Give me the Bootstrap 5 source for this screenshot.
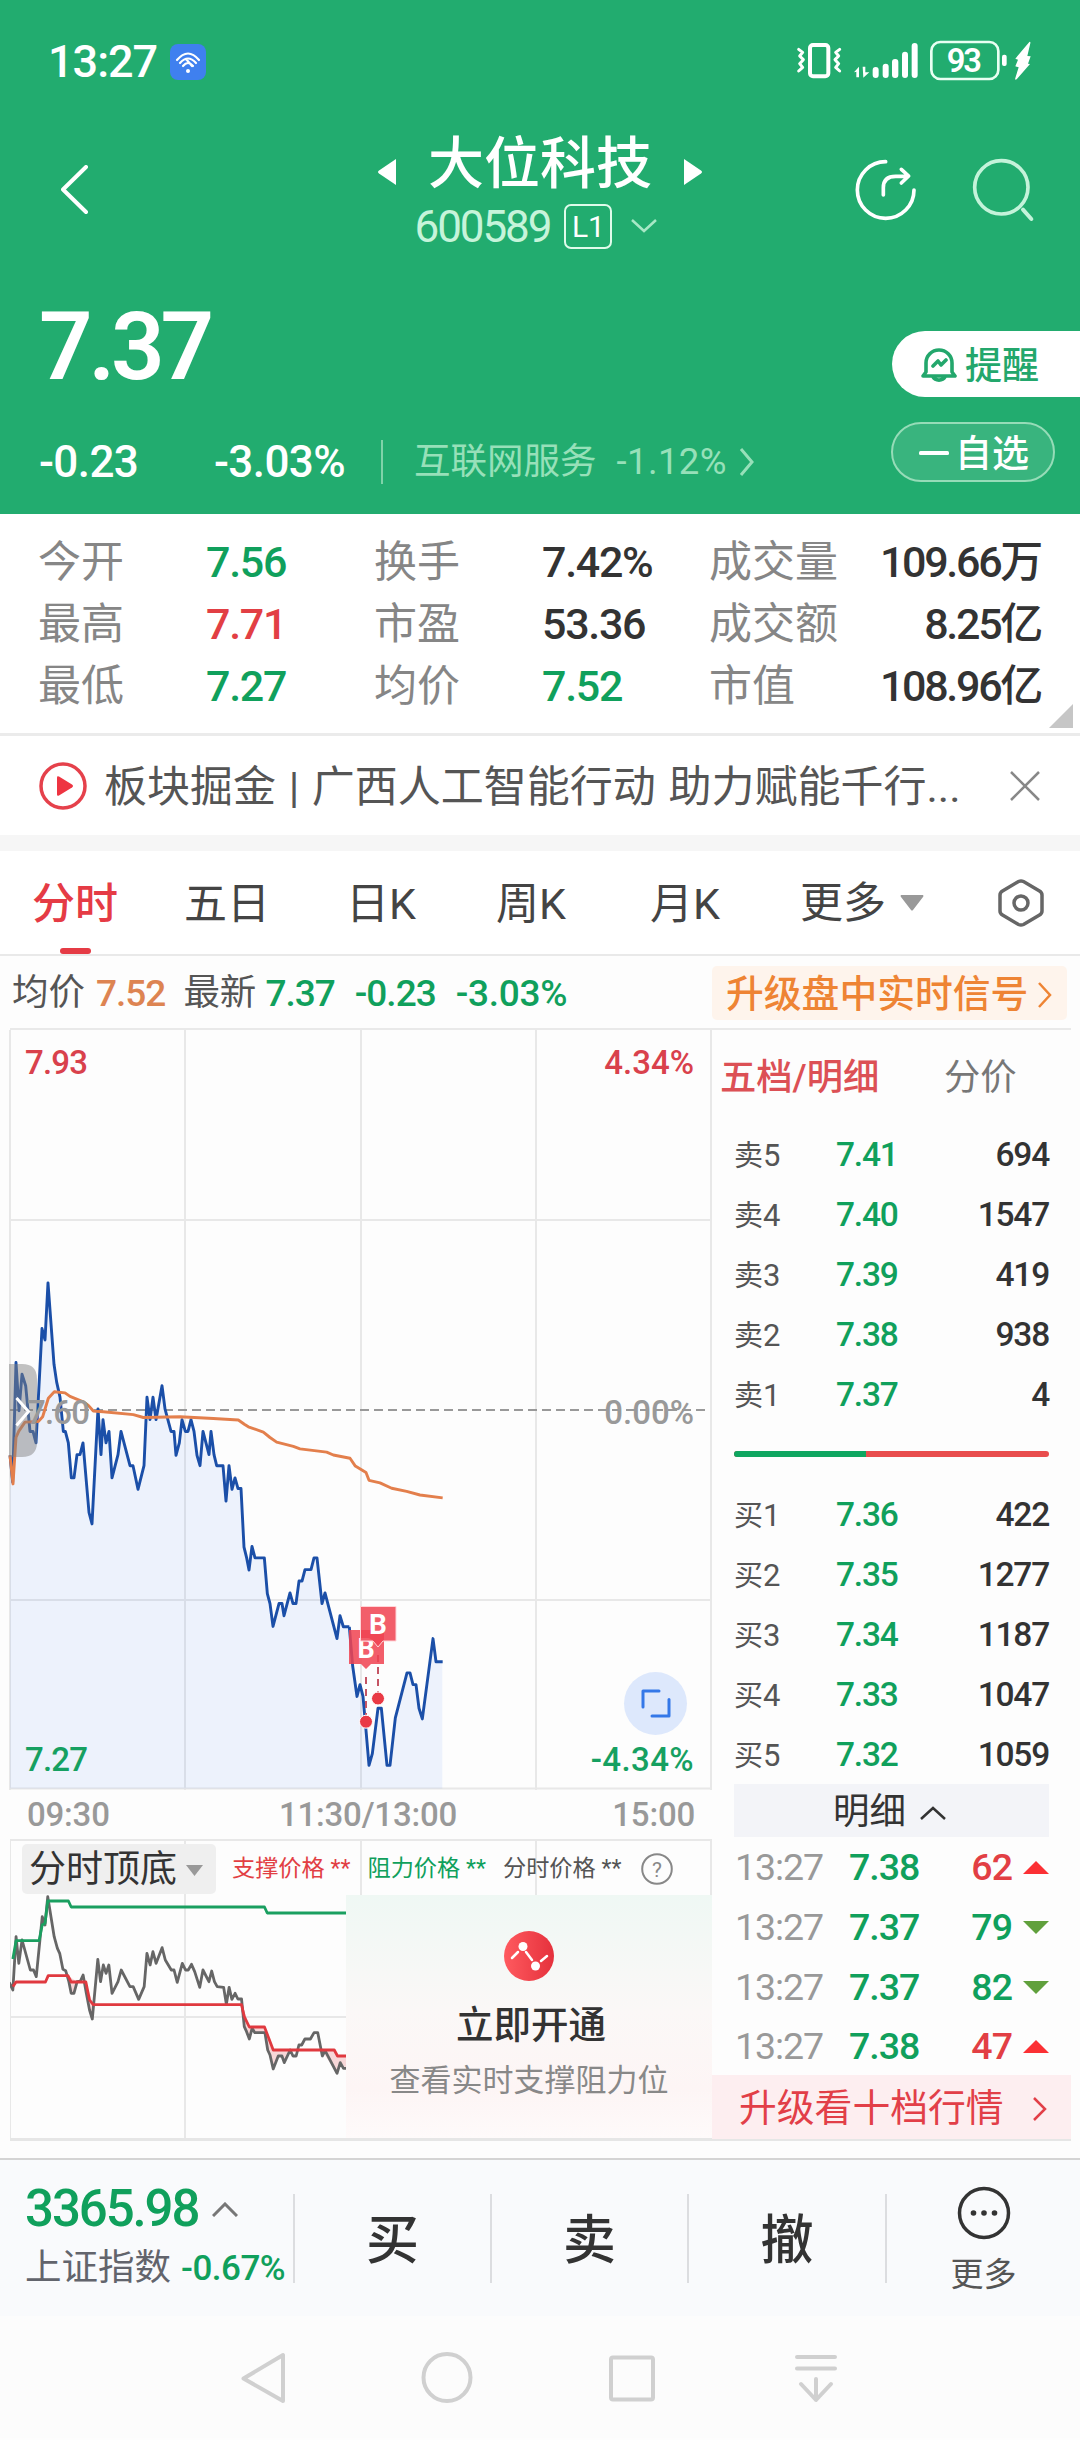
<!DOCTYPE html>
<html lang="zh-CN">
<head>
<meta charset="utf-8">
<meta name="viewport" content="width=device-width, initial-scale=1">
<title>大位科技 600589</title>
<link href="https://cdn.jsdelivr.net/npm/bootstrap@5.3.0/dist/css/bootstrap.min.css" rel="stylesheet">
<style>
body{width:1080px;height:2440px;margin:0;background:#fdfdfd;font-family:Roboto,"Noto Sans CJK SC",sans-serif;color:#333;line-height:1;overflow-x:hidden}
svg{display:block;flex:none}
svg text{font-family:Roboto,"Noto Sans CJK SC",sans-serif;font-weight:500}
.num{font-weight:500;white-space:nowrap}
.up{color:#e23f44}.down{color:#10a05c}
.txt{white-space:nowrap}
/* header */
.top{height:514px;background:#22ac6f;color:#fff}
.statusbar{height:120px;padding:0 0 0 48px}
.clock{font-size:45px;letter-spacing:-1px;padding-top:3px}
.titlebar{height:140px}
.stockname{font-size:56px;font-weight:500;height:60px;line-height:64px}
.code{font-size:44px;letter-spacing:-2.1px;color:#c6f4da;font-weight:400;padding-top:2px}
.lv{width:48px;height:45px;border:2px solid #dffbea;border-radius:7px;font-size:30px;line-height:42px}
.price{font-size:94px;letter-spacing:-4.2px;font-weight:600;line-height:94px}
.chg{font-size:44px;letter-spacing:-.6px}
.sector{font-size:36.5px;color:#97e0b9;font-weight:400;letter-spacing:0}
.vr{width:2px;height:44px;background:#7fd3a9;opacity:1}
.pill-alert{width:188px;height:66px;background:#fff;border-radius:33px 0 0 33px;color:#23a76c;font-size:37px;font-weight:500}
.pill-fav{width:164px;height:60px;border:2px solid #96dcb8;background:#39b47e;border-radius:30px;font-size:37px;font-weight:500;margin-right:25px}
/* key figures */
.stats{height:222px;padding:17px 38px 0 38px;border-bottom:3px solid #ebebeb;background:#fff;position:relative}
.srow{height:62px;display:grid;grid-template-columns:168px 168px 168px 167px 1fr;align-items:center;font-size:43px}
.srow .lb{color:#868686;white-space:nowrap}
.srow .num{font-size:43px;letter-spacing:-1.3px}
.srow .text-end{letter-spacing:-2.3px;padding-right:1px}
.corner{position:absolute;right:7px;bottom:5px}
.news{height:99px;padding:0 40px 0 39px;background:#fff;color:#555;font-size:43px}
.news .txt{word-spacing:2px;margin-left:17px;padding-top:4px}
.band{height:16px;background:#f6f6f6}
.tabs{height:105px;border-bottom:2px solid #e9e9e9;background:#fff;font-size:43px;color:#444;padding-left:32px}
.tabs>div{height:103px;line-height:106px;white-space:nowrap}
.tabs .on{color:#e53b45;font-weight:500;position:relative}
.tabs .on:after{content:"";position:absolute;left:28px;bottom:0;width:31px;height:6px;border-radius:3px;background:#e53b45}
.info{height:72px;padding:2px 13px 0 12px;font-size:36.5px;color:#555}
.info .num{font-size:37px;letter-spacing:-1px}
.signal{width:355px;height:54px;border-radius:5px;background:#fef4ec;color:#ee8434;font-size:37.8px;padding:3px 15px 0 14px;font-weight:500}
/* main split */
.main{height:1113px;border-top:2px solid #e9e9e9;border-bottom:3px solid #e6e6e6;margin:0 9px 0 10px}
.leftcol{width:702px}
.rightcol{width:359px}
.axis{height:49px;padding:0 17px 0 17px;font-size:33px;color:#999;letter-spacing:-.2px}
.sub{height:299px;position:relative}
.sub .hd{height:56px;padding-left:12px;position:relative;font-size:23.2px}
.sel{width:194px;height:50px;background:#efefef;border-radius:5px;font-size:37px;color:#333;padding-left:7px;margin-right:16px}
.promo{position:absolute;left:336px;top:56px;width:366px;height:243px;background:linear-gradient(#eff8f4,#fbf8f7 48%,#fdf5f5 80%,#fefafa)}
.book{padding:0 22px 0 22px}
.orow{height:60px;display:grid;grid-template-columns:102px 1fr auto;align-items:center}
.orow .lb{font-size:29px;color:#555}
.orow .lb b{font-size:31px;font-weight:400}
.orow .num{font-size:33.5px;letter-spacing:-1.2px}
.detail{height:53px;background:#f3f4f8;font-size:36.5px;color:#333}
.trow{height:60px;display:grid;grid-template-columns:114px 1fr auto 37px;align-items:center;padding-left:1px}
.trow .num{font-size:37.5px;letter-spacing:-1px;padding-top:1px}
.trow .tm{font-weight:400;color:#999;letter-spacing:-1.1px}
.tenlv{height:64px;background:#fdeef0;color:#e23f48;font-size:37.8px;padding:4px 24px 0 27px}
/* bottom */
.toolbar{margin-top:17px;height:158px;border-top:2px solid #d4d4d4;background:#f9fafc}
.idx{width:293px;padding:19px 0 0 25px}
.act{width:197px;height:89px;margin-top:34px;border-left:2px solid #dcdde0;font-size:53px;font-weight:500;color:#333;padding-top:5px}
.more{flex:1;color:#555;font-size:33px}
</style>
</head>
<body>
<header class="top">
  <div class="statusbar d-flex align-items-center">
    <span class="num clock">13:27</span>
    <svg width="36" height="36" style="margin:3px 0 0 13px" viewBox="0 0 36 36" fill="none" stroke="#fff" stroke-width="2.2" stroke-linecap="round"><rect width="36" height="36" rx="8" fill="#3f80ef" stroke="none"/><path d="M7 16q11-13 22 0M10 19q8-9 16 0M13 22q5-6 10 0M16 15l6 7"/><circle cx="18" cy="27" r="2" fill="#fff" stroke="none"/></svg>
    <svg class="ms-auto" width="300" height="74" style="margin-bottom:6px" viewBox="0 0 900 222" fill="#fff" stroke="none">
      <rect x="90" y="75" width="55" height="94" rx="9" fill="none" stroke="#fff" stroke-width="12"/>
      <path d="M56 88l12 9-9 11 11 11-11 12 9 11-12 11M179 88l-12 9 9 11-11 11 11 12-9 11 12 11" fill="none" stroke="#fff" stroke-width="9" stroke-linecap="round" stroke-linejoin="round"/>
      <path d="M222 157l15-17v32h-8v-17zM248 140h8v17h12l-18 16z"/>
      <rect x="278" y="141" width="18" height="33" rx="9"/><rect x="308" y="131" width="18" height="43" rx="9"/><rect x="336" y="117" width="19" height="57" rx="9"/><rect x="366" y="95" width="18" height="79" rx="9"/><rect x="395" y="69" width="18" height="105" rx="9"/>
      <rect x="454" y="66" width="201" height="111" rx="27" fill="none" stroke="#e8fff2" stroke-width="8"/>
      <text x="553" y="156" font-size="98" text-anchor="middle" textLength="106" style="font-weight:600">93</text>
      <rect x="666" y="104" width="14" height="34" rx="6"/>
      <path d="M748 66q4-2 3 4l-9 38 10 1-8 22 6 1-40 46q-6 4-4-4l10-32-10-3 8-20-8-3z"/>
    </svg>
  </div>
  <div class="titlebar d-flex">
    <div style="width:300px;padding:45px 0 0 61px"><svg width="28" height="50" viewBox="0 0 28 50" fill="none" stroke="#fff" stroke-width="4" stroke-linecap="round" stroke-linejoin="round" ><path d="M25 2L2 24.500 25 47"/></svg></div>
    <div class="flex-fill d-flex flex-column align-items-center pt-2">
      <div class="d-flex align-items-center justify-content-center mt-1">
        <svg width="18" height="26" style="margin-top:20px" viewBox="0 0 18 26"><path d="M18 0v26L1 14.500q-2-1.500 0-3z" fill="#fff"/></svg>
        <span class="stockname mx-4 px-2">大位科技</span>
        <svg width="18" height="26" style="margin-top:20px" viewBox="0 0 18 26"><path d="M0 0v26l17-11.500q2-1.500 0-3z" fill="#fff"/></svg>
      </div>
      <div class="d-flex align-items-center" style="margin-top:11px;margin-right:8px">
        <span class="code">600589</span><span class="lv text-center" style="margin-left:14px">L1</span>
        <svg style="margin-left:19px" width="26" height="14" viewBox="0 0 26 14" fill="none" stroke="#a8e8c6" stroke-width="2.500"><path d="M1 1l12 11L25 1"/></svg>
      </div>
    </div>
    <div style="width:300px;padding-top:34px">
      <svg width="280" height="74" viewBox="223 400 840 222" fill="none" stroke="#fff" stroke-width="11" stroke-linecap="round" stroke-linejoin="round">
        <g transform="translate(222 0)"><path d="M318 423a85 85 0 1 0 85 85M311 523v-22q0-34 37-34h37M365 446l22 20-22 21"/></g>
        <g stroke="#c4f3da" transform="translate(222 0)"><circle cx="665" cy="500" r="80"/><path d="M730 567l25 28" stroke-width="12"/></g>
      </svg>
    </div>
  </div>
  <div class="d-flex justify-content-between">
    <div style="padding:40px 0 0 39px">
      <div class="price">7.37</div>
      <div class="d-flex align-items-center num chg" style="margin-top:46px">
        <span style="width:175px">-0.23</span><span style="width:167px">-3.03%</span><span class="vr"></span>
        <span class="sector" style="margin-left:31px">互联网服务</span><span class="sector" style="margin-left:20px;letter-spacing:.4px">-1.12%</span>
        <svg style="margin-left:12px" width="15" height="28" viewBox="0 0 15 28" fill="none" stroke="#97e0b9" stroke-width="3"><path d="M2 1l11 13L2 27"/></svg>
      </div>
    </div>
    <div class="d-flex flex-column align-items-end" style="padding-top:71px">
      <div class="pill-alert d-flex align-items-center">
        <svg style="margin:2px 8px 0 29px" width="36" height="38" viewBox="0 0 36 38" fill="none" stroke="#23a76c" stroke-width="3.600" stroke-linejoin="round" stroke-linecap="round"><path d="M5 26V17a13 13 0 0 1 26 0v9l3 4H2zM12 31a6.500 5 0 0 0 12 0M12 20l5-5 3 4 5-5"/></svg>
        <span class="txt pt-1">提醒</span>
      </div>
      <div class="pill-fav d-flex align-items-center" style="margin-top:25px">
        <svg style="margin:2px 6px 0 26px" width="30" height="4" viewBox="0 0 30 4"><rect width="30" height="4" rx="1.500" fill="#fff"/></svg><span class="txt pt-1">自选</span>
      </div>
    </div>
  </div>
</header>

<section class="stats">
  <div class="srow"><span class="lb">今开</span><span class="num down">7.56</span><span class="lb">换手</span><span class="num">7.42%</span><span class="d-flex justify-content-between"><span class="lb">成交量</span><span class="num text-end">109.66万</span></span></div>
  <div class="srow"><span class="lb">最高</span><span class="num up">7.71</span><span class="lb">市盈</span><span class="num">53.36</span><span class="d-flex justify-content-between"><span class="lb">成交额</span><span class="num text-end">8.25亿</span></span></div>
  <div class="srow"><span class="lb">最低</span><span class="num down">7.27</span><span class="lb">均价</span><span class="num down">7.52</span><span class="d-flex justify-content-between"><span class="lb">市值</span><span class="num text-end">108.96亿</span></span></div>
  <svg class="corner" width="24" height="24"><path d="M24 0v24H0z" fill="#c6c6c6"/></svg>
</section>

<section class="news d-flex align-items-center">
  <svg width="48" height="48" viewBox="0 0 48 48"><circle cx="24" cy="24" r="22" fill="none" stroke="#e5414b" stroke-width="3.500"/><path d="M18 15.500q0-2 2-1l13 8q2 1.500 0 3l-13 8q-2 1-2-1z" fill="#ee3441"/></svg>
  <span class="txt">板块掘金 | 广西人工智能行动 助力赋能千行...</span>
  <svg class="ms-auto" width="30" height="30" viewBox="0 0 30 30" stroke="#888" stroke-width="2.500"><path d="M1 1l28 28M29 1L1 29"/></svg>
</section>
<div class="band"></div>

<nav class="tabs d-flex">
  <div class="on" style="width:152px">分时</div><div style="width:162px">五日</div><div style="width:150px">日K</div><div style="width:154px">周K</div><div style="width:150px">月K</div>
  <div class="d-flex align-items-center" style="width:198px">更多<svg style="margin:1px 0 0 14px" width="24" height="16" viewBox="0 0 24 16"><path d="M1 0h22q1 1 0 2L13 15q-1 1-2 0L1 2q-1-1 0-2z" fill="#999"/></svg></div>
  <svg style="margin-top:28px" width="46" height="48" viewBox="0 0 46 48" fill="none" stroke="#666" stroke-width="3.500"><path d="M20.500 2.500q2.500-1.200 5 0L41.500 12q2.500 1.500 2.500 4v16q0 2.500-2.500 4L25.500 45.500q-2.500 1.200-5 0L4.500 36Q2 34.500 2 32V16q0-2.500 2.500-4z"/><circle cx="23" cy="24" r="7"/></svg>
</nav>

<section class="info d-flex align-items-center">
  <span>均价</span><span class="num" style="color:#dd8452;margin-left:11px">7.52</span>
  <span style="margin-left:18px">最新</span><span class="num down" style="margin-left:9px">7.37</span><span class="num down" style="margin-left:20px">-0.23</span><span class="num down" style="margin-left:20px;letter-spacing:-.3px">-3.03%</span>
  <div class="signal ms-auto d-flex align-items-center justify-content-between txt">升级盘中实时信号<svg width="14" height="26" viewBox="0 0 14 26" fill="none" stroke="#ee8434" stroke-width="2.500"><path d="M1 1l11 12L1 25"/></svg></div>
</section>

<main class="main d-flex">
  <div class="leftcol">
    <!-- intraday price chart, page-space viewBox -->
    <svg width="702" height="760" viewBox="10 1030 702 760" fill="none" overflow="visible">
      <path d="M10 1030v760M185 1030v760M361 1030v760M536 1030v760M711 1030v760M10 1220h701M10 1600h701M10 1788.500h702" stroke="#e8e8e8" stroke-width="2"/>
      <path d="M10 1410h698" stroke="#999" stroke-width="2" stroke-dasharray="9 5"/>
      <g transform="translate(0 1250) scale(.333333 .357143)">
        <path fill="#3478f0" fill-opacity=".08" d="M30 1508V575L38 650 48 315 57 450 66 348 77 380 90 508 99 508 108 540 126 220 135 252 144 92 162 320 170 370 180 412 190 508 196 508 205 540 214 638 222 638 231 573 240 573 249 540 267 735 276 767 294 445 303 573 309 475 318 540 327 508 336 638 354 573 363 508 390 604 399 604 414 670 432 604 441 412 450 475 459 412 468 475 486 380 495 445 513 508 522 508 528 575 538 540 546 475 556 508 564 508 573 475 582 508 591 575 600 604 609 508 627 573 633 508 642 573 650 604 669 604 678 703 687 604 696 670 705 638 714 668 723 668 732 832 740 862 747 896 756 830 765 862 793 862 802 962 810 990 819 1054 837 990 846 990 852 1024 870 960 879 990 888 990 897 927 906 927 915 895 933 895 942 862 951 862 966 990 975 960 1011 1088 1020 1024 1030 1055 1048 1055 1058 1165 1071 1250 1080 1217 1089 1250 1098 1345 1107 1443 1117 1410 1134 1283 1144 1283 1161 1443 1170 1443 1186 1310 1221 1184 1230 1184 1239 1217 1248 1217 1257 1283 1267 1313 1299 1088 1308 1153 1327 1153V1508z"/>
        <path vector-effect="non-scaling-stroke" stroke="#1b4fa8" stroke-width="2.900" stroke-linejoin="round" d="M30 575L38 650 48 315 57 450 66 348 77 380 90 508 99 508 108 540 126 220 135 252 144 92 162 320 170 370 180 412 190 508 196 508 205 540 214 638 222 638 231 573 240 573 249 540 267 735 276 767 294 445 303 573 309 475 318 540 327 508 336 638 354 573 363 508 390 604 399 604 414 670 432 604 441 412 450 475 459 412 468 475 486 380 495 445 513 508 522 508 528 575 538 540 546 475 556 508 564 508 573 475 582 508 591 575 600 604 609 508 627 573 633 508 642 573 650 604 669 604 678 703 687 604 696 670 705 638 714 668 723 668 732 832 740 862 747 896 756 830 765 862 793 862 802 962 810 990 819 1054 837 990 846 990 852 1024 870 960 879 990 888 990 897 927 906 927 915 895 933 895 942 862 951 862 966 990 975 960 1011 1088 1020 1024 1030 1055 1048 1055M1048 1055L1058 1165 1071 1250 1080 1217 1089 1250 1098 1345 1107 1443 1117 1410 1134 1283 1144 1283 1161 1443 1170 1443 1186 1310 1221 1184 1230 1184 1239 1217 1248 1217 1257 1283 1267 1313 1299 1088 1308 1153 1328 1153"/>
        <path vector-effect="non-scaling-stroke" stroke="#e37f4c" stroke-width="2.900" stroke-linejoin="round" d="M30 575L39 655 48 525 56 508 75 482 115 480 128 467 145 415 163 397 195 400 210 410 250 425 265 435 280 451 310 453 400 461 430 469 540 467 640 472 715 476 733 488 745 495 790 510 810 525 830 538 880 550 900 557 980 566 1000 574 1050 583 1066 605 1098 623 1107 645 1140 652 1175 667 1220 676 1260 686 1328 694"/>
      </g>
      <path d="M9 1364h13q15 0 15 15v63q0 15-15 15H9z" fill="#808080" fill-opacity=".48"/>
      <g font-size="33" letter-spacing="-.8">
        <text x="27" y="1424" fill="#999">7.60</text><text x="694" y="1424" fill="#999" text-anchor="end" letter-spacing="0">0.00%</text>
        <text x="25" y="1074" fill="#d9414c">7.93</text><text x="694" y="1074" fill="#d9414c" text-anchor="end" letter-spacing="0">4.34%</text>
        <text x="25" y="1771" fill="#16a061">7.27</text><text x="694" y="1771" fill="#16a061" text-anchor="end" letter-spacing=".4">-4.34%</text>
      </g>
      <path d="M16.500 1398l12 13.500-12 14" stroke="#fff" stroke-width="3"/>
      <path d="M366 1677v38M378 1655v38" stroke="#c55564" stroke-width="2" stroke-dasharray="7 5"/>
      <path d="M349 1630h35v34H371l-5 5-5-5h-12z" fill="#f04452" fill-opacity=".86"/>
      <text x="366" y="1658" font-size="27" fill="#fff" text-anchor="middle" style="font-weight:700">B</text>
      <path d="M360.500 1606.500h35.500v34.500H383l-5 6-5-6h-12.500z" fill="#f04452" fill-opacity=".86" stroke="#ffd5d8" stroke-width="1"/>
      <text x="378" y="1634" font-size="28" fill="#fff" text-anchor="middle" style="font-weight:700">B</text>
      <circle cx="366" cy="1721.700" r="6.500" fill="#e93a45" stroke="#fff"/><circle cx="378" cy="1698.500" r="6.500" fill="#e93a45" stroke="#fff"/>
      <circle cx="655.500" cy="1703.500" r="31.500" fill="#dde8fc"/>
      <path d="M659 1691h-16v16M669 1699.500v16.500h-17" stroke="#3478e8" stroke-width="3" stroke-linecap="round" stroke-linejoin="round"/>
    </svg>
    <div class="axis d-flex justify-content-between align-items-center"><span class="num">09:30</span><span class="num" style="margin-left:14px">11:30/13:00</span><span class="num">15:00</span></div>
    <div class="sub">
      <svg class="position-absolute top-0 start-0" width="702" height="299" viewBox="10 1839 702 299" fill="none">
        <path d="M10 1840h702M10 1840v300M185 1840v300M361 1840v56M536 1840v56M711 1840v56M10 2017h340" stroke="#e8e8e8" stroke-width="2"/>
        <g transform="translate(0 1820) scale(.45918 .333333)">
          <path fill="#e23f48" fill-opacity=".2" d="M148 467L155 520 161 520 168 485zM181 480L201 597 203 554 187 486zM526 545L532 620 543 657 549 625 555 638 577 638 583 690 595 747 606 708 614 708 619 728 632 690 595 690 576 621 543 621zM700 690L734 760 741 728 754 745V708H735L728 690z"/>
          <g stroke-width="2.800" stroke-linejoin="round">
          <path vector-effect="non-scaling-stroke" stroke="#666" d="M20 487L28 510 35 350 41 430 48 360 66 450 73 450 79 470 92 290 98 315 104 230 118 350 125 385 130 400 137 448 143 452 150 485 155 520 161 520 168 485 175 483 181 465 188 520 195 570 201 597 213 418 219 485 225 435 231 460 237 435 244 520 257 485 264 450 283 500 290 500 302 538 314 500 320 400 327 435 333 395 340 430 353 383 360 420 373 450 379 450 386 487 397 430 404 450 410 450 417 433 424 455 435 502 442 450 455 485 461 453 467 485 473 500 487 502 493 553 499 502 505 538 512 520 518 537 526 537 532 620 537 635 543 657 549 625 555 638 577 638 583 690 588 705 595 747 606 708 614 708 619 728 632 690 638 708 645 708 651 675 657 675 664 657 676 657 684 638 692 638 702 708 708 692 734 760 741 728 748 745 754 745"/>
          <path vector-effect="non-scaling-stroke" stroke="#1a9f60" d="M28 417L35 362 85 362 92 315 98 310 104 243 149 243 155 261 576 261 582 279 756 279"/>
          <path vector-effect="non-scaling-stroke" stroke="#e0393f" d="M28 500L35 486 99 486 105 467 148 467 155 486 187 486 195 540 203 554 526 554 532 590 543 621 576 621 595 690 728 690 735 708 756 708"/>
          </g>
        </g>
      </svg>
      <div class="hd d-flex align-items-center pt-1">
        <div class="sel d-flex align-items-center txt">分时顶底<svg style="margin:3px 0 0 9px" width="17" height="11"><path d="M0 0h17L8.500 11z" fill="#999"/></svg></div>
        <span class="txt up">支撑价格 **</span><span class="txt down" style="margin-left:17px">阻力价格 **</span><span class="txt" style="margin-left:17px;color:#555">分时价格 **</span>
        <svg style="margin-left:20px" width="32" height="32" viewBox="0 0 32 32"><circle cx="16" cy="16" r="14.800" fill="none" stroke="#888" stroke-width="2"/><text x="16" y="23.500" font-size="21" text-anchor="middle" fill="#888" style="font-weight:400">?</text></svg>
      </div>
      <div class="promo d-flex flex-column align-items-center">
        <svg style="margin-top:36px" width="50" height="50" viewBox="0 0 50 50"><defs><linearGradient id="g"><stop stop-color="#ff5a5f"/><stop offset="1" stop-color="#e5313c"/></linearGradient></defs><circle cx="25" cy="25" r="25" fill="url(#g)"/><circle cx="19" cy="15.500" r="4.500" fill="#fff"/><circle cx="31.500" cy="35" r="4.500" fill="#fff"/><path d="M8 27l6-6M22 21l6 8M37 30l6-5" stroke="#fff" stroke-width="2.500" stroke-linecap="round"/></svg>
        <div style="font-size:37.5px;font-weight:500;margin:26px 0 0 4px">立即开通</div>
        <div style="font-size:31px;color:#888;margin-top:20px">查看实时支撑阻力位</div>
      </div>
    </div>
  </div>

  <div class="rightcol">
    <div class="d-flex align-items-center txt" style="height:95px;font-size:36.3px;padding:2px 0 0 8px;color:#777"><span style="color:#dc5055;font-weight:500;width:224px">五档/明细</span><span>分价</span></div>
    <div class="book">
      <div class="orow"><span class="lb">卖<b>5</b></span><span class="num down">7.41</span><span class="num">694</span></div>
      <div class="orow"><span class="lb">卖<b>4</b></span><span class="num down">7.40</span><span class="num">1547</span></div>
      <div class="orow"><span class="lb">卖<b>3</b></span><span class="num down">7.39</span><span class="num">419</span></div>
      <div class="orow"><span class="lb">卖<b>2</b></span><span class="num down">7.38</span><span class="num">938</span></div>
      <div class="orow"><span class="lb">卖<b>1</b></span><span class="num down">7.37</span><span class="num">4</span></div>
      <div class="d-flex align-items-center" style="height:60px"><div class="progress w-100" style="height:6px;margin-bottom:2px;background:#e94d4d"><div class="progress-bar" style="width:42%;background:#0fa660"></div></div></div>
      <div class="orow"><span class="lb">买<b>1</b></span><span class="num down">7.36</span><span class="num">422</span></div>
      <div class="orow"><span class="lb">买<b>2</b></span><span class="num down">7.35</span><span class="num">1277</span></div>
      <div class="orow"><span class="lb">买<b>3</b></span><span class="num down">7.34</span><span class="num">1187</span></div>
      <div class="orow"><span class="lb">买<b>4</b></span><span class="num down">7.33</span><span class="num">1047</span></div>
      <div class="orow"><span class="lb">买<b>5</b></span><span class="num down">7.32</span><span class="num">1059</span></div>
      <div class="detail d-flex align-items-center justify-content-center pt-1 pe-1" style="margin-top:-1px">明细<svg style="margin-left:14px" width="26" height="14" viewBox="0 0 26 14" fill="none" stroke="#333" stroke-width="2.500"><path d="M1 13L13 2l12 11"/></svg></div>
      <div class="trow"><span class="num tm">13:27</span><span class="num down">7.38</span><span class="num up">62</span><svg class="ms-auto" width="26" height="13"><path d="M13 0l13 13H0z" fill="#fb3034"/></svg></div>
      <div class="trow"><span class="num tm">13:27</span><span class="num down">7.37</span><span class="num down">79</span><svg class="ms-auto" width="26" height="13"><path d="M0 0h26L13 13z" fill="#60a03c"/></svg></div>
      <div class="trow"><span class="num tm">13:27</span><span class="num down">7.37</span><span class="num down">82</span><svg class="ms-auto" width="26" height="13"><path d="M0 0h26L13 13z" fill="#60a03c"/></svg></div>
      <div class="trow" style="height:58px"><span class="num tm">13:27</span><span class="num down">7.38</span><span class="num up">47</span><svg class="ms-auto" width="26" height="13"><path d="M13 0l13 13H0z" fill="#fb3034"/></svg></div>
    </div>
    <div class="tenlv d-flex align-items-center justify-content-between txt">升级看十档行情<svg width="14" height="24" viewBox="0 0 14 24" fill="none" stroke="#e23f48" stroke-width="2.500"><path d="M1 1l11 11L1 23"/></svg></div>
  </div>
</main>

<footer class="toolbar d-flex">
  <div class="idx">
    <div class="d-flex align-items-center"><span class="num down" style="font-size:51px;letter-spacing:-2.100px;line-height:60px">3365.98</span><svg style="margin-left:14px" width="26" height="15" viewBox="0 0 26 15" fill="none" stroke="#777" stroke-width="3"><path d="M1 14L13 2l12 12"/></svg></div>
    <div class="d-flex align-items-center txt" style="font-size:36.500px;color:#62646c;margin-top:11px">上证指数<span class="num down" style="font-size:35px;letter-spacing:-.5px;margin-left:10px">-0.67%</span></div>
  </div>
  <div class="act d-flex align-items-center justify-content-center">买</div>
  <div class="act d-flex align-items-center justify-content-center">卖</div>
  <div class="act d-flex align-items-center justify-content-center" style="width:198px">撤</div>
  <div class="act m-0 p-0 border-0 d-flex" style="width:195px;height:auto">
    <div style="width:2px;height:89px;margin-top:34px;background:#dcdde0"></div>
    <div class="more d-flex flex-column align-items-center fw-normal"><svg style="margin-top:26px" width="54" height="54" viewBox="0 0 54 54"><circle cx="27" cy="27" r="24.500" fill="none" stroke="#333" stroke-width="3.500"/><g fill="#333"><circle cx="16.500" cy="27" r="2.800"/><circle cx="27" cy="27" r="2.800"/><circle cx="37.500" cy="27" r="2.800"/></g></svg><span class="txt" style="margin-top:18px">更多</span></div>
  </div>
</footer>
<div class="d-flex" style="height:122px;background:#fcfcfc;padding:32px 0 0 238px">
  <svg width="610" height="60" viewBox="238 2348 610 60" fill="none" stroke="#d0d0d0" stroke-width="4" stroke-linejoin="round" stroke-linecap="round"><path d="M283 2355v46L243.500 2378.500z"/><circle cx="447" cy="2377.500" r="23.500"/><rect x="611" y="2357.500" width="42" height="42" rx="2"/><path d="M797 2357h38M797 2368.500h38M816 2379v21M801 2384l15 16 15-16"/></svg>
</div>
<script src="https://cdn.jsdelivr.net/npm/bootstrap@5.3.0/dist/js/bootstrap.bundle.min.js"></script>
</body>
</html>
